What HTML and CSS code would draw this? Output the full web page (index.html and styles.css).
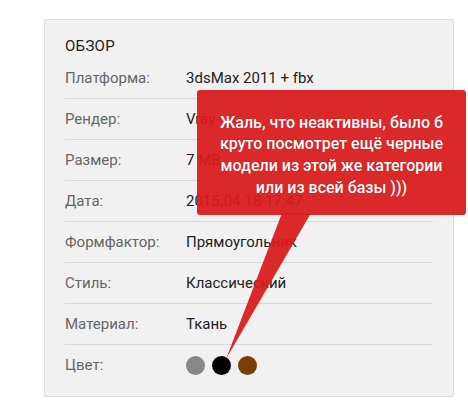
FILE: index.html
```html
<!DOCTYPE html>
<html lang="ru">
<head>
    <meta charset="UTF-8">
    <meta name="viewport" content="width=device-width, initial-scale=1.0">
    <title>Обзор модели</title>
    <link rel="stylesheet" href="styles.css">
</head>
<body>

    <div class="page">
        <div class="overview">
            <h3 class="overview-title">ОБЗОР</h3>
            <div class="spec-row"><span class="spec-label">Платформа:</span><span class="spec-value">3dsMax 2011 + fbx</span></div>
            <div class="spec-row"><span class="spec-label">Рендер:</span><span class="spec-value">Vray</span></div>
            <div class="spec-row"><span class="spec-label">Размер:</span><span class="spec-value">7 MB</span></div>
            <div class="spec-row"><span class="spec-label">Дата:</span><span class="spec-value">2015.04.18 17:47</span></div>
            <div class="spec-row"><span class="spec-label">Формфактор:</span><span class="spec-value">Прямоугольник</span></div>
            <div class="spec-row"><span class="spec-label">Стиль:</span><span class="spec-value">Классический</span></div>
            <div class="spec-row"><span class="spec-label">Материал:</span><span class="spec-value">Ткань</span></div>
            <div class="spec-row">
                <span class="spec-label">Цвет:</span>
                <span class="spec-value colors">
                    <span class="swatch swatch-grey"></span>
                    <span class="swatch swatch-black"></span>
                    <span class="swatch swatch-brown"></span>
                </span>
            </div>
        </div>

        <!-- комментарий-выноска поверх карточки -->
        <div class="callout">
            Жаль, что неактивны, было б<br>
            круто посмотрет ещё черные<br>
            модели из этой же категории<br>
            или из всей базы )))
        </div>
        <svg class="callout-tail" width="468" height="408" viewBox="0 0 468 408">
            <polygon points="282,213 311,213 226,359" fill="#d91c1c" fill-opacity="0.94"/>
        </svg>
    </div>

</body>
</html>
```

FILE: styles.css
```css
:root {
    --card-bg: #f1f1f1;
    --card-border: #dcdcdc;
    --line-color: #d9d9d9;
    --label-color: #666;
    --value-color: #222;
    --callout-red: rgba(217, 28, 28, 0.94);
}
* { margin: 0; padding: 0; box-sizing: border-box; }
body {
    font-family: Roboto, "Liberation Sans", Arial, sans-serif;
    background: #fff;
    width: 468px;
    height: 408px;
    overflow: hidden;
}
.page {
    position: relative;
    padding: 19px 0 0 44px;
    height: 100%;
}
.overview {
    width: 410px;
    background: var(--card-bg);
    border: 1px solid var(--card-border);
    border-radius: 2px;
    padding: 0 20px 11px 20px;
}
.overview-title {
    font-size: 15px;
    font-weight: 400;
    line-height: 18px;
    color: var(--value-color);
    padding: 17px 0 3px;
    letter-spacing: 0.3px;
}
.spec-row {
    display: flex;
    align-items: center;
    height: 41px;
    border-bottom: 1px solid var(--line-color);
    font-size: 15px;
    line-height: 18px;
}
.spec-row:last-child { border-bottom: none; height: 40px; }
.spec-label { width: 121px; color: var(--label-color); flex-shrink: 0; }
.spec-value { color: var(--value-color); }
.colors { display: flex; gap: 7px; }
.swatch { width: 19px; height: 19px; border-radius: 50%; display: block; }
.swatch-grey { background: #878787; }
.swatch-black { background: #000; }
.swatch-brown { background: #7a3d08; }

.callout {
    position: absolute;
    left: 197px;
    top: 90px;
    width: 269px;
    height: 125px;
    padding-top: 5px;
    background: var(--callout-red);
    border-radius: 3px;
    color: #fff;
    font-size: 16px;
    font-weight: 500;
    line-height: 21.6px;
    text-align: center;
    display: flex;
    align-items: center;
    justify-content: center;
    text-shadow: 0 0 1px rgba(120, 0, 0, 0.5);
}
.callout-tail {
    position: absolute;
    left: 0;
    top: 0;
    pointer-events: none;
}
```
